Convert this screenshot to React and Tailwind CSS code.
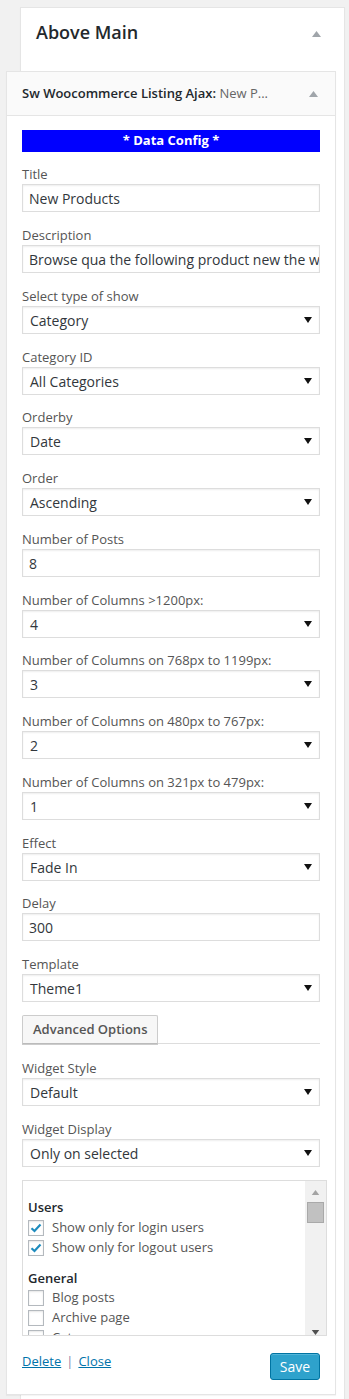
import React from "react";

const font = { fontFamily: '"Open Sans", "Noto Sans", sans-serif' };

function Caret() {
  return (
    <svg width="8" height="6" viewBox="0 0 8 6" className="block">
      <path d="M0 0 H8 L4 6 Z" fill="#111" />
    </svg>
  );
}

function UpArrow({ color = "#a0a5aa", w = 9, h = 6 }) {
  return (
    <svg width={w} height={h} viewBox="0 0 9 6" className="block">
      <path d="M0 6 L4.5 0 L9 6 Z" fill={color} />
    </svg>
  );
}

function TextField({ label, value, cls }) {
  return (
    <div className={"flex flex-col " + cls}>
      <div className="text-[13px] leading-[19px] text-[#555]">{label}</div>
      <div className="h-[28px] border border-[#ddd] bg-white pl-[6px] flex items-center overflow-hidden whitespace-nowrap text-[14px] text-[#32373c] shadow-[inset_0_1px_2px_rgba(0,0,0,0.07)]">
        {value}
      </div>
    </div>
  );
}

function SelectField({ label, value, cls }) {
  return (
    <div className={"flex flex-col " + cls}>
      <div className="text-[13px] leading-[19px] text-[#555]">{label}</div>
      <div className="h-[28px] border border-[#ddd] bg-white pl-[7px] pr-[7px] flex items-center justify-between text-[14px] text-[#32373c] shadow-[inset_0_1px_2px_rgba(0,0,0,0.07)]">
        <span>{value}</span>
        <Caret />
      </div>
    </div>
  );
}

function Check({ checked, label }) {
  return (
    <div className="flex items-center h-[20px]">
      <div className="w-[16px] h-[16px] border border-[#b4b9be] bg-white shadow-[inset_0_1px_2px_rgba(0,0,0,0.1)] flex items-center justify-center">
        {checked && (
          <svg width="12" height="10" viewBox="0 0 12 10">
            <path d="M1.5 5.2 L4.5 8 L10.5 1.5" fill="none" stroke="#1e8cbe" strokeWidth="2.2" />
          </svg>
        )}
      </div>
      <span className="ml-[8px] text-[13px] text-[#555] whitespace-nowrap">{label}</span>
    </div>
  );
}

export default function App() {
  const fields = [
    ["t", "Title", "New Products"],
    ["t", "Description", "Browse qua the following product new the website"],
    ["s", "Select type of show", "Category"],
    ["s", "Category ID", "All Categories"],
    ["s", "Orderby", "Date"],
    ["s", "Order", "Ascending"],
    ["t", "Number of Posts", "8"],
    ["s", "Number of Columns >1200px:", "4"],
    ["s", "Number of Columns on 768px to 1199px:", "3"],
    ["s", "Number of Columns on 480px to 767px:", "2"],
    ["s", "Number of Columns on 321px to 479px:", "1"],
    ["s", "Effect", "Fade In"],
    ["t", "Delay", "300"],
    ["s", "Template", "Theme1"],
  ];

  const tight = new Set([4, 8, 12]);

  return (
    <div style={font} className="w-[349px] h-[1399px] overflow-hidden bg-[#f1f1f1] pt-[7px] pl-[20px] pr-[4px]">
      <div className="bg-white border border-[#e5e5e5] shadow-[0_1px_1px_rgba(0,0,0,0.04)] pb-[40px]">
        <div className="h-[63px] flex items-start justify-between pl-[15px] pr-[23px] pt-[11px]">
          <div className="text-[18px] leading-[26px] font-semibold text-[#23282d]">Above Main</div>
          <div className="pt-[12px]"><UpArrow w={9} h={6} /></div>
        </div>
        <div className="-ml-[15px] w-[330px] bg-white border border-[#e5e5e5] shadow-[0_1px_1px_rgba(0,0,0,0.04)]">
          <div className="h-[44px] bg-[#fafafa] border-b border-[#e5e5e5] flex items-center justify-between pl-[15px] pr-[17px]">
            <div className="text-[13px] text-[#23282d] whitespace-nowrap">
              <span className="font-semibold">Sw Woocommerce Listing Ajax:</span>
              <span className="text-[#666]"> New P...</span>
            </div>
            <UpArrow w={9} h={6} />
          </div>
          <div className="px-[15px] pt-[14px] pb-[14px]">
            <div className="h-[22px] bg-[#0000ff] text-white font-bold text-[13px] flex items-center justify-center">
              * Data Config *
            </div>
            <div className="flex flex-col mt-[13px]">
              {fields.map(([k, l, v], i) => {
                const cls = i === 0 ? "" : tight.has(i) ? "mt-[13px]" : "mt-[14px]";
                return k === "t" ? (
                  <TextField key={l} label={l} value={v} cls={cls} />
                ) : (
                  <SelectField key={l} label={l} value={v} cls={cls} />
                );
              })}
            </div>
            <div className="mt-[13px] flex items-end border-b border-[#ddd]">
              <div className="h-[29px] px-[10px] border border-[#ccc] border-b-[#bbb] rounded-t-[2px] bg-[#f7f7f7] shadow-[0_1px_0_#ccc] flex items-center text-[13px] font-semibold text-[#555] -mb-px">
                Advanced Options
              </div>
            </div>
            <div className="flex flex-col gap-[14px] mt-[15px]">
              <SelectField label="Widget Style" value="Default" cls="" />
              <SelectField label="Widget Display" value="Only on selected" cls="" />
            </div>
            <div className="mt-[13px] w-[305px] h-[156px] border border-[#ddd] bg-white flex overflow-hidden">
              <div className="flex-1 pl-[5px] pt-[17px] overflow-hidden">
                <div className="text-[13px] leading-[19px] font-semibold text-[#23282d]">Users</div>
                <div className="mt-[1px]">
                  <Check checked label="Show only for login users" />
                  <Check checked label="Show only for logout users" />
                </div>
                <div className="mt-[11px] text-[13px] leading-[19px] font-semibold text-[#23282d]">General</div>
                <div>
                  <Check label="Blog posts" />
                  <Check label="Archive page" />
                  <Check label="Category page" />
                </div>
              </div>
              <div className="w-[21px] bg-[#f1f1f1] flex flex-col items-center">
                <div className="pt-[9px] h-[21px]"><UpArrow color="#a3a3a3" w={9} h={5} /></div>
                <div className="w-[17px] h-[21px] bg-[#c1c1c1] border border-[#a9a9a9]" />
                <div className="flex-1" />
                <div className="pb-[8px] rotate-180"><UpArrow color="#505050" w={9} h={5} /></div>
              </div>
            </div>
            <div className="mt-[15px] flex items-start justify-between">
              <div className="text-[13px] leading-[20px] text-[#0073aa]">
                <span className="underline">Delete</span>
                <span className="text-[#8c7fa8] mx-[5px]">|</span>
                <span className="underline">Close</span>
              </div>
              <div className="mt-[2px] h-[27px] w-[50px] rounded-[3px] bg-[#2ea2cc] border border-[#0074a2] shadow-[inset_0_1px_0_rgba(120,200,230,0.5)] flex items-center justify-center text-[14px] text-white">
                Save
              </div>
            </div>
          </div>
        </div>
      </div>
    </div>
  );
}
